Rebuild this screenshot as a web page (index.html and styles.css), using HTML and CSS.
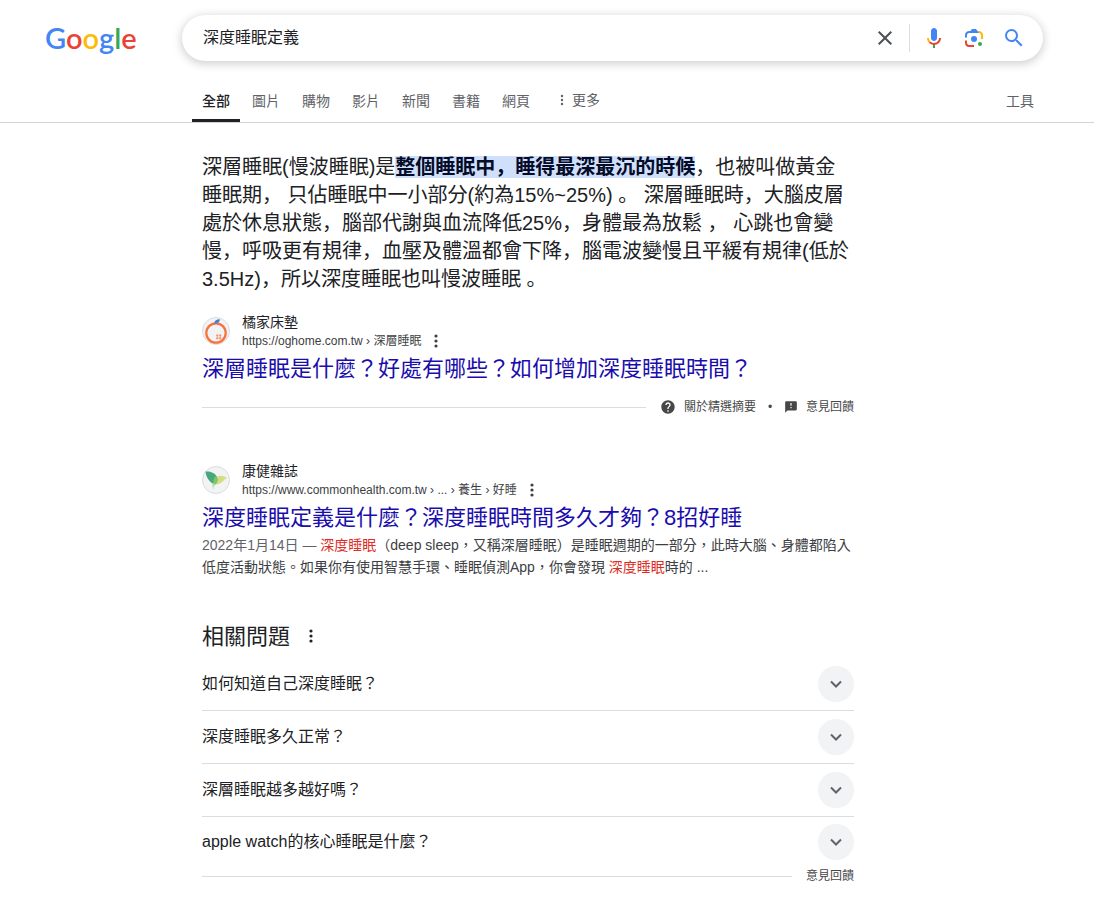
FILE: index.html
```html
<!DOCTYPE html>
<html lang="zh-TW">

<head>
    <meta charset="UTF-8">
    <meta name="viewport" content="width=device-width, initial-scale=1.0">
    <title>深度睡眠定義 - Google 搜尋</title>
    <link rel="stylesheet" href="styles.css">
</head>

<body>
    <header>
        <div class="top-bar">
            <a class="logo" href="#" aria-label="Google"><span class="blue">G</span><span class="red">o</span><span class="yellow">o</span><span class="blue">g</span><span class="green">l</span><span class="red">e</span></a>
            <form class="search-box">
                <input type="text" name="q" value="深度睡眠定義" aria-label="搜尋">
                <button type="reset" class="icon-button" aria-label="清除">
                    <svg viewBox="0 0 24 24" fill="#4d5156"><path d="M19 6.41L17.59 5 12 10.59 6.41 5 5 6.41 10.59 12 5 17.59 6.41 19 12 13.41 17.59 19 19 17.59 13.41 12z"/></svg>
                </button>
                <span class="separator"></span>
                <button type="button" class="icon-button" aria-label="語音搜尋">
                    <svg viewBox="0 0 24 24">
                        <path fill="#4285f4" d="m12 15c1.66 0 3-1.31 3-2.97v-7.02c0-1.66-1.34-3.01-3-3.01s-3 1.34-3 3.01v7.02c0 1.66 1.34 2.97 3 2.97z"/>
                        <path fill="#34a853" d="m11 18.08h2v3.92h-2z"/>
                        <path fill="#fbbc04" d="m7.05 16.87c-1.27-1.33-2.05-2.83-2.05-4.87h2c0 1.45.56 2.42 1.47 3.38v.32l-1.15 1.18z"/>
                        <path fill="#ea4335" d="m12 16.93a4.97 5.25 0 0 1-3.54-1.55l-1.41 1.49c1.26 1.34 3.02 2.13 4.95 2.13 3.87 0 6.99-2.92 6.99-7h-1.99c0 2.92-2.24 4.93-5 4.93z"/>
                    </svg>
                </button>
                <button type="button" class="icon-button" aria-label="以圖搜尋">
                    <svg viewBox="0 0 192 192">
                        <circle fill="#34a853" cx="144" cy="144" r="16"/>
                        <circle fill="#4285f4" cx="96" cy="104" r="24"/>
                        <path fill="#ea4335" d="M24 135.2c0 18.11 14.69 32.8 32.8 32.8H96v-16l-40.1-.1c-8.8 0-15.9-8.19-15.9-17.9v-18H24v19.2z"/>
                        <path fill="#fbbc04" d="M168 72.8c0-18.11-14.69-32.8-32.8-32.8H116l20 16c8.8 0 16 8.29 16 18v30h16V72.8z"/>
                        <path fill="#4285f4" d="M112 24H80L68 40H56.8C38.69 40 24 54.69 24 72.8V92h16V74c0-9.71 7.2-18 16-18h80l-24-32z"/>
                    </svg>
                </button>
                <button type="submit" class="icon-button" aria-label="搜尋">
                    <svg viewBox="0 0 24 24" fill="#4285f4"><path d="M15.5 14h-.79l-.28-.27A6.47 6.47 0 0 0 16 9.5 6.5 6.5 0 1 0 9.5 16c1.61 0 3.09-.59 4.23-1.57l.27.28v.79l5 4.99L20.49 19l-4.99-5zm-6 0C7.01 14 5 11.99 5 9.5S7.01 5 9.5 5 14 7.01 14 9.5 11.99 14 9.5 14z"/></svg>
                </button>
            </form>
        </div>
        <nav class="tabs">
            <a class="tab active" href="#">全部</a>
            <a class="tab" href="#">圖片</a>
            <a class="tab" href="#">購物</a>
            <a class="tab" href="#">影片</a>
            <a class="tab" href="#">新聞</a>
            <a class="tab" href="#">書籍</a>
            <a class="tab" href="#">網頁</a>
            <button type="button" class="tab more">
                <svg class="dots" viewBox="0 0 4 16"><circle cx="2" cy="4" r="1.2"/><circle cx="2" cy="8" r="1.2"/><circle cx="2" cy="12" r="1.2"/></svg>
                更多
            </button>
            <button type="button" class="tab tools">工具</button>
        </nav>
    </header>

    <main>
        <section class="featured">
            <p class="answer" lang="ja">深層睡眠(慢波睡眠)是<b>整個睡眠中，睡得最深最沉的時候</b>，也被叫做黃金睡眠期， 只佔睡眠中一小部分(約為15%~25%) 。 深層睡眠時，大腦皮層處於休息狀態，腦部代謝與血流降低25%，身體最為放鬆 ， 心跳也會變慢，呼吸更有規律，血壓及體溫都會下降，腦電波變慢且平緩有規律(低於3.5Hz)，所以深度睡眠也叫慢波睡眠 。</p>
            <div class="source">
                <svg class="favicon" viewBox="0 0 28 28">
                    <circle cx="14" cy="14" r="13.5" fill="#f1f3f4" stroke="#dadce0"/>
                    <circle cx="14" cy="16" r="9.7" fill="none" stroke="#f9703a" stroke-width="2.2"/>
                    <path d="M12 6.5C12.3 3.5 15 2 18 2.200C17.800 5 15.500 6.800 12 6.500z" fill="#3c82d6"/>
                    <path d="M14.300 17.500h2v2h-2zM17.200 17.500h2v2h-2zM14.300 20.200h2v2h-2zM17.200 20.200h2v2h-2z" fill="#f58b62"/>
                </svg>
                <div class="site">
                    <div class="site-name">橘家床墊</div>
                    <div class="site-url">
                        <cite>https://oghome.com.tw › 深層睡眠</cite>
                        <button type="button" class="menu" aria-label="關於這個結果">
                            <svg class="dots" viewBox="0 0 4 16"><circle cx="2" cy="3" r="1.6"/><circle cx="2" cy="8" r="1.6"/><circle cx="2" cy="13" r="1.6"/></svg>
                        </button>
                    </div>
                </div>
            </div>
            <h3><a href="#">深層睡眠是什麼？好處有哪些？如何增加深度睡眠時間？</a></h3>
            <div class="footer-line">
                <a href="#">
                    <svg viewBox="0 0 24 24"><path d="M12 2C6.480 2 2 6.480 2 12s4.480 10 10 10 10-4.480 10-10S17.520 2 12 2zm1 17h-2v-2h2v2zm2.070-7.750l-.9.920C13.450 12.900 13 13.500 13 15h-2v-.5c0-1.100.450-2.100 1.170-2.830l1.240-1.260c.370-.360.590-.860.590-1.410 0-1.100-.9-2-2-2s-2 .9-2 2H8c0-2.210 1.790-4 4-4s4 1.790 4 4c0 .880-.360 1.680-.930 2.250z"/></svg>
                    關於精選摘要
                </a>
                <span class="bullet">•</span>
                <a href="#">
                    <svg class="flag" viewBox="0 0 24 24"><path d="M20 2H4c-1.100 0-2 .9-2 2v18l4-4h14c1.100 0 2-.9 2-2V4c0-1.100-.9-2-2-2zm-7 12h-2v-2h2v2zm0-4h-2V5h2v5z"/></svg>
                    意見回饋
                </a>
            </div>
        </section>

        <section class="result">
            <div class="source">
                <svg class="favicon" viewBox="0 0 28 28">
                    <circle cx="14" cy="14" r="13.5" fill="#f1f3f4" stroke="#dadce0"/>
                    <path d="M13 13C16 8.500 20.500 9 25 12C21 14 20 18.500 13 18.500z" fill="#d3de82"/>
                    <path d="M3.500 5.500C9 5 15.500 7.500 15.500 14C15.500 17 13.500 18 12.200 19C9 16 4.500 14 3.500 5.500z" fill="#45a97c"/>
                    <path d="M12.300 12.200C13 10.500 14 10 14.600 10C16 13 15.800 17 12.200 19.500C11 17 11 14.500 12.300 12.200z" fill="#82c46d"/>
                    <path d="M10.500 16.500L13 18.500Q11 21 11.500 24Q9.800 20 10.500 16.500z" fill="#b9dfa5"/>
                </svg>
                <div class="site">
                    <div class="site-name">康健雜誌</div>
                    <div class="site-url">
                        <cite>https://www.commonhealth.com.tw › ... › 養生 › 好睡</cite>
                        <button type="button" class="menu" aria-label="關於這個結果">
                            <svg class="dots" viewBox="0 0 4 16"><circle cx="2" cy="3" r="1.6"/><circle cx="2" cy="8" r="1.6"/><circle cx="2" cy="13" r="1.6"/></svg>
                        </button>
                    </div>
                </div>
            </div>
            <h3><a href="#">深度睡眠定義是什麼？深度睡眠時間多久才夠？8招好睡</a></h3>
            <p class="snippet"><span class="date">2022年1月14日 — </span><em>深度睡眠</em>（deep sleep，又稱深層睡眠）是睡眠週期的一部分，此時大腦、身體都陷入低度活動狀態。如果你有使用智慧手環、睡眠偵測App，你會發現 <em>深度睡眠</em>時的 ...</p>
        </section>

        <section class="related">
            <div class="related-head">
                <h2>相關問題</h2>
                <button type="button" class="menu" aria-label="關於這個結果">
                    <svg class="dots" viewBox="0 0 4 16"><circle cx="2" cy="3" r="1.6"/><circle cx="2" cy="8" r="1.6"/><circle cx="2" cy="13" r="1.6"/></svg>
                </button>
            </div>
            <button type="button" class="question">
                <span class="question-text">如何知道自己深度睡眠？</span>
                <span class="arrow"><svg viewBox="0 0 24 24"><path d="M7 9.500l5 5 5-5"/></svg></span>
            </button>
            <button type="button" class="question">
                <span class="question-text">深度睡眠多久正常？</span>
                <span class="arrow"><svg viewBox="0 0 24 24"><path d="M7 9.500l5 5 5-5"/></svg></span>
            </button>
            <button type="button" class="question">
                <span class="question-text">深層睡眠越多越好嗎？</span>
                <span class="arrow"><svg viewBox="0 0 24 24"><path d="M7 9.500l5 5 5-5"/></svg></span>
            </button>
            <button type="button" class="question">
                <span class="question-text">apple watch的核心睡眠是什麼？</span>
                <span class="arrow"><svg viewBox="0 0 24 24"><path d="M7 9.500l5 5 5-5"/></svg></span>
            </button>
            <div class="footer-line">
                <a href="#">意見回饋</a>
            </div>
        </section>
    </main>
</body>

</html>
```
FILE: styles.css
```css
* {
    box-sizing: border-box;
}

body {
    margin: 0;
    font-family: "Liberation Sans", "Noto Sans CJK TC", sans-serif;
    font-size: 14px;
    color: #202124;
    background-color: #fff;
}

a {
    color: inherit;
    text-decoration: none;
}

button {
    padding: 0;
    border: none;
    background: none;
    font: inherit;
    color: inherit;
    cursor: pointer;
}

svg {
    display: block;
    flex-shrink: 0;
}

h2,
h3,
p {
    margin: 0;
    font-weight: normal;
}

/* Header */
header {
    border-bottom: 1px solid #d2d2d2;
}

.top-bar {
    display: flex;
    align-items: center;
    padding: 15px 51px 0 45px;
}

.logo {
    width: 137px;
    flex-shrink: 0;
    font-family: Lato, sans-serif;
    font-size: 29px;
    font-weight: 600;
    line-height: 46px;
}

.blue {
    color: #4285f4;
}

.red {
    color: #ea4335;
}

.yellow {
    color: #fbbc05;
}

.green {
    color: #34a853;
}

.search-box {
    flex: 1;
    display: flex;
    align-items: center;
    height: 46px;
    padding: 0 17px 0 21px;
    border-radius: 24px;
    box-shadow: 0 2px 8px 1px rgba(64, 60, 67, 0.24);
}

.search-box input {
    flex: 1;
    min-width: 0;
    padding: 0 0 4px;
    border: none;
    outline: none;
    background: none;
    font: inherit;
    font-size: 16px;
    color: #202124;
}

.icon-button {
    margin-left: 16px;
}

.icon-button svg {
    width: 24px;
    height: 24px;
}

.separator {
    width: 1px;
    height: 28px;
    margin: 0 -4px 0 12px;
    background-color: #dadce0;
}

.tabs {
    display: flex;
    gap: 2px;
    padding: 19px 50px 0 192px;
    color: #5f6368;
}

.tab {
    height: 42px;
    padding: 0 10px;
    border-bottom: 3px solid transparent;
    line-height: 42px;
}

.active {
    color: #202124;
    border-color: #202124;
    font-weight: 500;
}

.more {
    display: flex;
    align-items: center;
    gap: 8px;
    margin-left: 16px;
}

.tab.more {
    padding-left: 2px;
}

.tools {
    margin-left: auto;
}

.dots {
    width: 4px;
    height: 16px;
    fill: currentColor;
}

/* Results */
main {
    max-width: 854px;
    padding: 30px 0 20px 202px;
}

.answer {
    font-family: "Liberation Sans", "Noto Sans CJK JP", sans-serif;
    font-size: 20px;
    line-height: 28px;
}

.answer b {
    background-color: #d0e0fc;
    color: #040c28;
}

.source {
    display: flex;
    align-items: center;
    gap: 12px;
}

.featured .source {
    margin-top: 19px;
}

.favicon {
    width: 28px;
    height: 28px;
}

.site-name {
    line-height: 20px;
}

.site-url {
    display: flex;
    align-items: center;
    gap: 13px;
    font-size: 12px;
    line-height: 18px;
    color: #3c4043;
}

.site-url cite {
    font-style: normal;
}

h3 {
    font-size: 22px;
    line-height: 38px;
    color: #1a0dab;
}

/* Rule that fills the space left of the small links */
.footer-line {
    display: flex;
    align-items: center;
    height: 18px;
    font-size: 12px;
    line-height: 18px;
    color: #474747;
}

.footer-line::before {
    content: "";
    flex: 1;
    height: 1px;
    margin-right: 14px;
    background-color: #dadce0;
}

.footer-line a {
    display: flex;
    align-items: center;
    gap: 8px;
}

.footer-line svg {
    width: 16px;
    height: 16px;
    fill: #474747;
}

.footer-line .flag {
    width: 14px;
    height: 14px;
}

.featured .footer-line {
    margin-top: 10px;
}

.bullet {
    width: 28px;
    text-align: center;
}

.result {
    margin-top: 45px;
}

.snippet {
    margin-top: -3px;
    line-height: 22px;
    color: #3c4043;
}

.snippet .date {
    color: #5f6368;
}

.snippet em {
    font-style: normal;
    color: #dd2c25;
}

/* Related questions */
.related {
    margin-top: 42px;
}

.related-head {
    display: flex;
    align-items: center;
    gap: 19px;
    height: 32px;
    margin-bottom: 6px;
    color: #202124;
}

.related-head h2 {
    padding-bottom: 4px;
    font-size: 22px;
}

.question {
    display: flex;
    align-items: center;
    justify-content: space-between;
    width: 100%;
    height: 53px;
    font-size: 16px;
    text-align: left;
    border-bottom: 1px solid #dadce0;
}

.question:last-of-type {
    height: 50px;
    padding-bottom: 0;
    border-bottom: none;
}

.question-text {
    padding-bottom: 4px;
}

.arrow {
    display: flex;
    align-items: center;
    justify-content: center;
    width: 36px;
    height: 36px;
    border-radius: 50%;
    background-color: #f1f3f4;
}

.arrow svg {
    width: 24px;
    height: 24px;
    fill: none;
    stroke: #5f6368;
    stroke-width: 2;
}
```
